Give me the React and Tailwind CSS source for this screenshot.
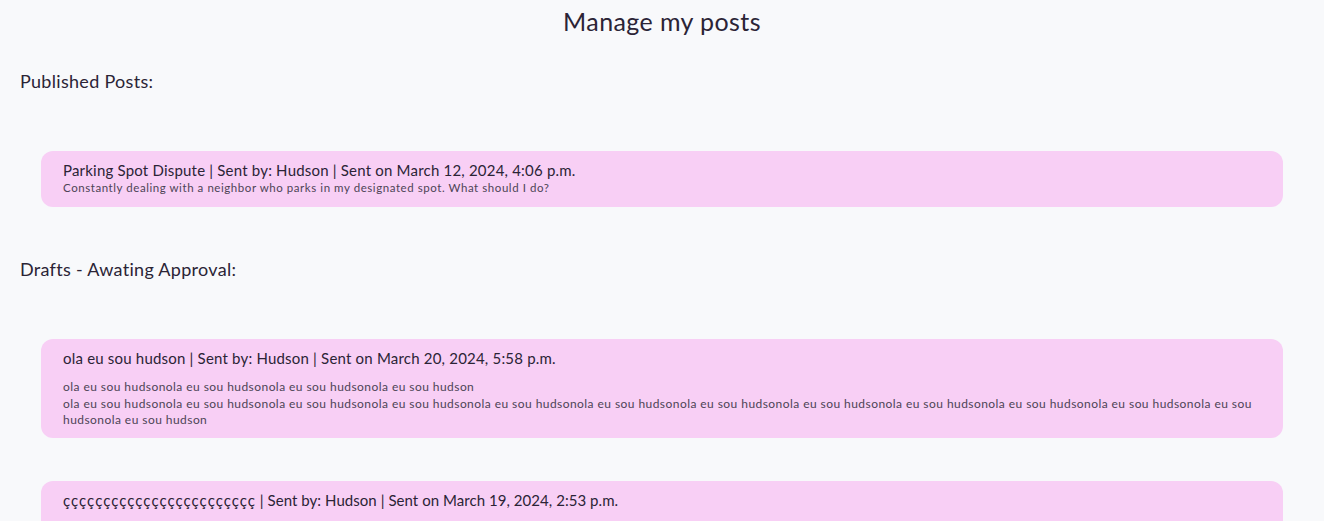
import React from "react";

const rep = (s, n) => Array(n).fill(s).join("");

function Card({ title, children, className = "" }) {
  return (
    <div className={`mx-[41px] rounded-[12px] bg-[#f8cff5] px-[22px] ${className}`}>
      <div className="text-[15px] leading-[17px] tracking-[0.2px] text-[#2b2436]">{title}</div>
      {children}
    </div>
  );
}

export default function App() {
  return (
    <div
      className="min-h-[521px] bg-[#f8f9fb] text-[#2b2436]"
      style={{ fontFamily: "Lato, 'Noto Sans', sans-serif" }}
    >
      <h1 className="pt-[6px] text-center text-[25px] leading-[30px] tracking-[0.4px]">Manage my posts</h1>

      <h2 className="mt-[33px] px-[20px] text-[18px] leading-[24px] tracking-[0.3px]">Published Posts:</h2>

      <Card
        className="mt-[58px] pt-[11px] pb-[12px]"
        title="Parking Spot Dispute | Sent by: Hudson | Sent on March 12, 2024, 4:06 p.m."
      >
        <p className="mt-[2px] text-[11.5px] leading-[14px] tracking-[0.56px] text-[#4d4456]">
          Constantly dealing with a neighbor who parks in my designated spot. What should I do?
        </p>
      </Card>

      <h2 className="mt-[50px] px-[20px] text-[18px] leading-[24px] tracking-[0.3px]">Drafts - Awating Approval:</h2>

      <Card
        className="mt-[58px] pt-[11px] pb-[9px]"
        title="ola eu sou hudson | Sent by: Hudson | Sent on March 20, 2024, 5:58 p.m."
      >
        <p className="mt-[12px] text-[12px] leading-[16.5px] tracking-[0.44px] text-[#4d4456]">
          {rep("ola eu sou hudson", 4)}
          <br />
          {rep("ola eu sou hudson", 13)}
        </p>
      </Card>

      <Card
        className="mt-[43px] pt-[11px] pb-[40px]"
        title={
          <>
            <span className="tracking-[1px]">çççççççççççççççççççççççç</span>
            <span className="tracking-[0.05px]"> | Sent by: Hudson | Sent on March 19, 2024, 2:53 p.m.</span>
          </>
        }
      />
    </div>
  );
}
